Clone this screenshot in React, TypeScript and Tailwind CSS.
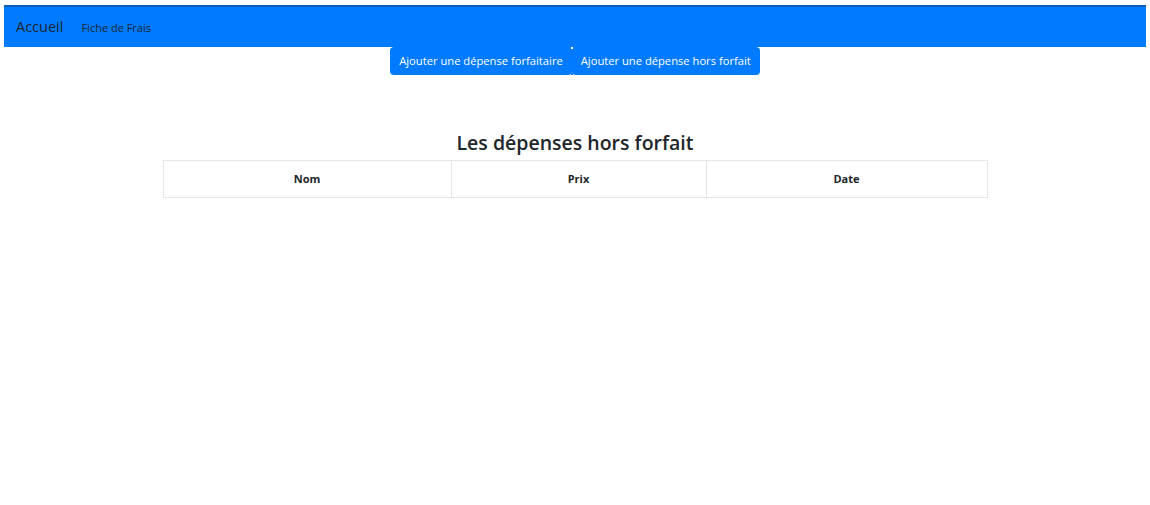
export default function App() {
  return (
    <div className="min-h-[505px] bg-white px-1 pt-[5px] font-['Open_Sans','Noto_Sans',sans-serif] text-[#212529]">
      <nav className="flex h-[42px] items-center border-t-2 border-[#0a5cb8] bg-[#007bff] px-3">
        <a className="mr-[18px] text-[14.5px] leading-none text-[#1b2530]">Accueil</a>
        <a className="text-[11px] leading-none text-[#1b2530]">Fiche de Frais</a>
      </nav>
      <div className="flex justify-center">
        <div className="relative flex">
          <button className="h-[28px] rounded-b-[4px] rounded-tl-[4px] bg-[#007bff] px-[9px] text-[11.2px] text-white">
            Ajouter une dépense forfaitaire
          </button>
          <span className="absolute left-[181px] top-0 h-[2px] w-[2px] bg-white" />
          <span className="absolute bottom-0 left-[181px] h-[2px] w-[2px] bg-[#007bff]" />
          <button className="h-[28px] rounded-b-[4px] rounded-tr-[4px] bg-[#007bff] px-[9px] text-[11.2px] text-white">
            Ajouter une dépense hors forfait
          </button>
        </div>
      </div>
      <h2 className="mt-[55px] text-center text-[19.5px] font-semibold leading-[26px]">Les dépenses hors forfait</h2>
      <div className="mt-[4px] flex justify-center">
        <table className="w-[825px] border-collapse">
          <thead>
            <tr className="h-[37px] text-[11px] font-bold">
              <th className="w-[288px] border border-[#e3e6e9]">Nom</th>
              <th className="w-[255px] border border-[#e3e6e9]">Prix</th>
              <th className="border border-[#e3e6e9]">Date</th>
            </tr>
          </thead>
        </table>
      </div>
    </div>
  )
}
